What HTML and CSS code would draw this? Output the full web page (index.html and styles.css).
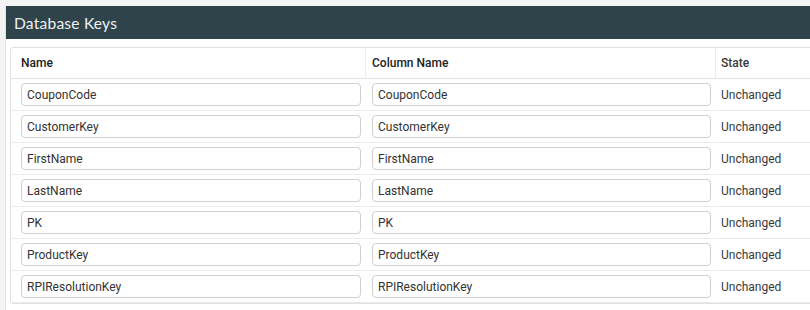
FILE: index.html
```html
<!DOCTYPE html>
<html lang="en">
<head>
<meta charset="utf-8">
<title>Database Keys</title>
<link rel="stylesheet" href="styles.css">
</head>
<body>
<section class="panel">
  <header class="panel-head">
    <h2 class="panel-title">Database Keys</h2>
  </header>
  <div class="panel-body">
    <table class="keys">
      <colgroup>
        <col class="col-name">
        <col class="col-column">
        <col class="col-state">
      </colgroup>
      <thead>
        <tr>
          <th class="c-name">Name</th>
          <th class="c-column">Column Name</th>
          <th class="c-state">State</th>
        </tr>
      </thead>
      <tbody>
        <tr>
          <td class="c-name"><input class="field" type="text" value="CouponCode"></td>
          <td class="c-column"><input class="field" type="text" value="CouponCode"></td>
          <td class="c-state">Unchanged</td>
        </tr>
        <tr>
          <td class="c-name"><input class="field" type="text" value="CustomerKey"></td>
          <td class="c-column"><input class="field" type="text" value="CustomerKey"></td>
          <td class="c-state">Unchanged</td>
        </tr>
        <tr>
          <td class="c-name"><input class="field" type="text" value="FirstName"></td>
          <td class="c-column"><input class="field" type="text" value="FirstName"></td>
          <td class="c-state">Unchanged</td>
        </tr>
        <tr>
          <td class="c-name"><input class="field" type="text" value="LastName"></td>
          <td class="c-column"><input class="field" type="text" value="LastName"></td>
          <td class="c-state">Unchanged</td>
        </tr>
        <tr>
          <td class="c-name"><input class="field" type="text" value="PK"></td>
          <td class="c-column"><input class="field" type="text" value="PK"></td>
          <td class="c-state">Unchanged</td>
        </tr>
        <tr>
          <td class="c-name"><input class="field" type="text" value="ProductKey"></td>
          <td class="c-column"><input class="field" type="text" value="ProductKey"></td>
          <td class="c-state">Unchanged</td>
        </tr>
        <tr>
          <td class="c-name"><input class="field" type="text" value="RPIResolutionKey"></td>
          <td class="c-column"><input class="field" type="text" value="RPIResolutionKey"></td>
          <td class="c-state">Unchanged</td>
        </tr>
      </tbody>
    </table>
  </div>
</section>
</body>
</html>
```

FILE: styles.css
```css
html, body {
  margin: 0;
  padding: 0;
}

body {
  background: #f4f4f4;
  overflow: hidden;
  font-family: Roboto, "Liberation Sans", sans-serif;
  color: #333;
  padding: 6px 0 0 5px;
}

.panel {
  box-sizing: border-box;
  width: 805px;
  height: 304px;
  overflow: hidden;
  background: #fff;
  border-left: 1px solid #e2e2e2;
}

.panel-head {
  height: 33px;
  background: #2f434a;
  display: flex;
  align-items: center;
  padding-left: 8px;
}

.panel-title {
  margin: 0;
  font-family: Lato, "Open Sans", sans-serif;
  font-weight: 400;
  font-size: 15.6px;
  letter-spacing: 0.2px;
  color: #eef2f3;
}

.panel-body {
  padding: 8px 0 0 4px;
}

.keys {
  width: 880px;
  table-layout: fixed;
  border-collapse: separate;
  border-spacing: 0;
  border: 1px solid #e1e1e1;
  border-radius: 3px;
  font-size: 12px;
}

.col-name { width: 354px; }
.col-column { width: 350px; }

.keys th {
  height: 30px;
  padding: 0;
  text-align: left;
  font-weight: 500;
  color: #222;
  border-bottom: 1px solid #e3e3e3;
  vertical-align: middle;
}

.keys th + th,
.keys td + td {
  border-left: 1px solid #ececec;
}

.keys td {
  height: 23px;
  padding: 4px 0;
  border-bottom: 1px solid #ebebeb;
  vertical-align: middle;
}

.keys tbody td + td {
  border-left-color: transparent;
}

.keys .c-name { padding-left: 10px; padding-right: 4px; }
.keys .c-column { padding-left: 6px; padding-right: 4px; }
.keys .c-state { padding-left: 5px; color: #3a3a3a; }

.field {
  display: block;
  box-sizing: border-box;
  width: 100%;
  height: 23px;
  margin: 0;
  padding: 0 5px;
  border: 1px solid #cfcfcf;
  border-radius: 4px;
  background: #fff;
  font-family: Roboto, "Liberation Sans", sans-serif;
  font-size: 12px;
  color: #333;
  outline: none;
}
```
